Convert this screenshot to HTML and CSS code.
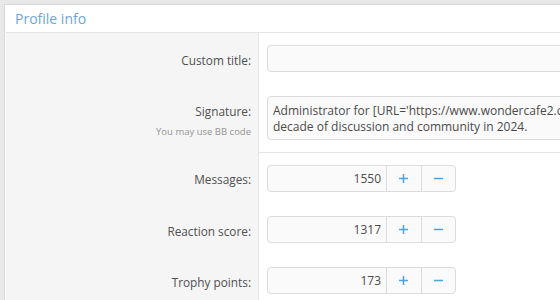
FILE: index.html
```html
<!DOCTYPE html>
<html>
  <head>
    <title>Profile info</title>
    <link rel="stylesheet" href="styles.css">
  </head>
  <body>
    <div class="block">
      <h2 class="block-header">Profile info</h2>

      <dl class="form-row">
        <dt><label for="custom-title">Custom title:</label></dt>
        <dd><input id="custom-title" class="input" type="text" /></dd>
      </dl>

      <dl class="form-row">
        <dt>
          <label for="signature">Signature:</label>
          <div class="hint">You may use BB code</div>
        </dt>
        <dd>
          <textarea id="signature" class="input textarea" wrap="off">Administrator for [URL='https://www.wondercafe2.ca/']WonderCafe2[/URL], celebrating a
decade of discussion and community in 2024.</textarea>
        </dd>
      </dl>

      <dl class="form-row separated">
        <dt><label>Messages:</label></dt>
        <dd>
          <div class="number-box">
            <input class="number-input" type="text" value="1550" />
            <button class="number-btn" type="button">
              <svg width="9" height="9" viewBox="0 0 9 9"><path d="M4.5 0v9M0 4.5h9" /></svg>
            </button>
            <button class="number-btn" type="button">
              <svg width="9" height="9" viewBox="0 0 9 9"><path d="M0 4.5h9" /></svg>
            </button>
          </div>
        </dd>
      </dl>

      <dl class="form-row">
        <dt><label>Reaction score:</label></dt>
        <dd>
          <div class="number-box">
            <input class="number-input" type="text" value="1317" />
            <button class="number-btn" type="button">
              <svg width="9" height="9" viewBox="0 0 9 9"><path d="M4.5 0v9M0 4.5h9" /></svg>
            </button>
            <button class="number-btn" type="button">
              <svg width="9" height="9" viewBox="0 0 9 9"><path d="M0 4.5h9" /></svg>
            </button>
          </div>
        </dd>
      </dl>

      <dl class="form-row">
        <dt><label>Trophy points:</label></dt>
        <dd>
          <div class="number-box">
            <input class="number-input" type="text" value="173" />
            <button class="number-btn" type="button">
              <svg width="9" height="9" viewBox="0 0 9 9"><path d="M4.5 0v9M0 4.5h9" /></svg>
            </button>
            <button class="number-btn" type="button">
              <svg width="9" height="9" viewBox="0 0 9 9"><path d="M0 4.5h9" /></svg>
            </button>
          </div>
        </dd>
      </dl>
    </div>
  </body>
</html>
```

FILE: styles.css
```css
html,
body {
  margin: 0;
  height: 100%;
  overflow: hidden;
}
body {
  background-color: #e8e8e8;
  padding: 4px 0 0 4px;
  font-family: 'Open Sans', sans-serif;
  font-size: 12px;
  color: #505050;
}

.block {
  width: 820px;
  background-color: #fff;
  border-top: 1px solid #d8d8d8;
  border-left: 1px solid #d8d8d8;
  padding-left: 1px;
}

.block-header {
  margin: 0;
  padding: 0 9px;
  height: 27px;
  line-height: 27px;
  font-size: 14px;
  font-weight: normal;
  color: #6ea6db;
  border-bottom: 1px solid #e4e4e4;
}

.form-row {
  display: flex;
  margin: 0;
}

.form-row > dt {
  width: 245px;
  flex: none;
  background-color: #f5f5f5;
  padding: 18px 7px 12px 0;
  text-align: right;
  font-size: 11.8px;
  line-height: 18px;
}

.form-row > dd {
  flex: 1;
  margin: 0;
  padding: 12px 8px;
  border-left: 1px solid #e6e6e6;
}

.form-row.separated > dd {
  border-top: 1px solid #e4e4e4;
}

.hint {
  font-size: 9.5px;
  line-height: 14px;
  color: #949494;
  margin-top: 5px;
}

.input {
  display: block;
  box-sizing: border-box;
  width: 100%;
  height: 27px;
  margin: 0;
  padding: 0 5px;
  font-family: inherit;
  font-size: 12px;
  color: #4a4a4a;
  background-color: #fafafa;
  border: 1px solid #dcdcdc;
  border-radius: 4px;
  outline: none;
}

.textarea {
  height: 44px;
  padding: 6px 5px 4px;
  line-height: 16px;
  resize: none;
  overflow: hidden;
}

.number-box {
  display: flex;
  width: 189px;
  height: 27px;
  box-sizing: border-box;
  background-color: #fafafa;
  border: 1px solid #dcdcdc;
  border-radius: 4px;
  overflow: hidden;
}

.number-input {
  width: 118px;
  flex: none;
  box-sizing: border-box;
  margin: 0;
  padding: 0 5px;
  border: none;
  background: transparent;
  text-align: right;
  font-family: inherit;
  font-size: 12px;
  color: #4a4a4a;
  outline: none;
}

.number-btn {
  flex: 1;
  margin: 0;
  padding: 0;
  border: none;
  border-left: 1px solid #dcdcdc;
  background: transparent;
  display: flex;
  justify-content: center;
  align-items: center;
}

.number-btn svg {
  stroke: #4aa3e3;
  stroke-width: 1.5;
  fill: none;
}
```
